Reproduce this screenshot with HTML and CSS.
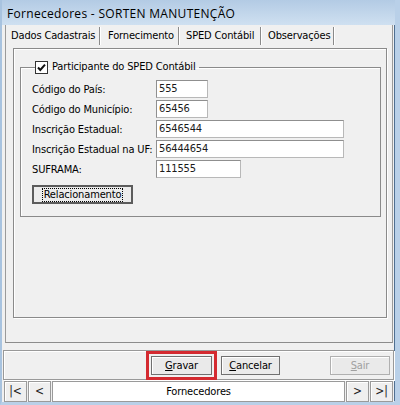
FILE: index.html
```html
<!DOCTYPE html>
<html>
<head>
    <meta charset="utf-8"/>
    <title>Fornecedores - SORTEN MANUTENÇÃO</title>
    <link rel="stylesheet" href="styles.css">
</head>
<body>
<div class="window">
    <div class="titlebar">Fornecedores - SORTEN MANUTENÇÃO</div>

    <div class="client">
        <div class="tabctl">
            <div class="tabs">
                <div class="tab tab-dados">Dados Cadastrais</div>
                <div class="tab tab-forn">Fornecimento</div>
                <div class="tab tab-sped active">SPED Contábil</div>
                <div class="tab tab-obs">Observações</div>
            </div>

            <div class="page">
                <fieldset class="group">
                    <legend>
                        <span class="check">
                            <svg width="13" height="13" viewBox="0 0 13 13">
                                <rect x="0.5" y="0.5" width="12" height="12" fill="#fff" stroke="#333"/>
                                <path d="M3 6.5 L5.3 9 L10 3.6" fill="none" stroke="#111" stroke-width="2"/>
                            </svg>
                        </span>
                        Participante do SPED Contábil
                    </legend>

                    <div class="rows">
                        <div class="row">
                            <label>Código do País:</label>
                            <div class="field w-short">555</div>
                        </div>
                        <div class="row">
                            <label>Código do Município:</label>
                            <div class="field w-short">65456</div>
                        </div>
                        <div class="row">
                            <label>Inscrição Estadual:</label>
                            <div class="field w-long">6546544</div>
                        </div>
                        <div class="row">
                            <label>Inscrição Estadual na UF:</label>
                            <div class="field w-long">56444654</div>
                        </div>
                        <div class="row">
                            <label>SUFRAMA:</label>
                            <div class="field w-mid">111555</div>
                        </div>
                    </div>

                    <button class="btn btn-default"><span class="focus">Relacionamento</span></button>
                </fieldset>
            </div>
        </div>

        <div class="buttonbar">
            <div class="highlight">
                <button class="btn btn-action"><u>G</u>ravar</button>
            </div>
            <button class="btn btn-action btn-cancel"><u>C</u>ancelar</button>
            <button class="btn btn-action btn-sair" disabled><u>S</u>air</button>
        </div>

        <div class="navbar">
            <div class="navbtn">|&lt;</div>
            <div class="navbtn">&lt;</div>
            <div class="navtitle">Fornecedores</div>
            <div class="navbtn">&gt;</div>
            <div class="navbtn">&gt;|</div>
        </div>
    </div>
</div>
</body>
</html>
```

FILE: styles.css
```css
html,
body {
    margin: 0;
    padding: 0;
    background: #f0f0f0;
}

.window {
    width: 400px;
    height: 405px;
    box-sizing: border-box;
    display: flex;
    flex-direction: column;
    background: #bcd3ea;
    border-left: 2px solid #a8c3df;
    border-right: 5px solid #b9d0e8;
    border-bottom: 4px solid #b9d0e8;
    box-shadow: inset -1px 0 0 #4f6f91, inset 0 -1px 0 #4f6f91;
    font-family: "DejaVu Sans Condensed", Tahoma, "Liberation Sans", sans-serif;
    font-size: 11px;
    letter-spacing: -0.15px;
    color: #000;
}

.titlebar {
    height: 25px;
    flex: none;
    box-sizing: border-box;
    padding: 5px 0 0 5px;
    font-family: "Open Sans", "Liberation Sans", sans-serif;
    font-size: 12px;
    letter-spacing: 0.3px;
    color: #000;
    background: linear-gradient(to bottom, #b3cbe4, #cfe0f1);
}

.client {
    flex: 1;
    display: flex;
    flex-direction: column;
    background: #f0f0f0;
    margin-right: 1px;
}

/* tab control */

.tabctl {
    height: 318px;
    box-sizing: border-box;
    margin: 0 1px 0 3px;
    padding: 0 5px 0 7px;
    border-left: 1px solid #9a9a9a;
    border-bottom: 1px solid #8c8c8c;
    border-right: 1px solid #9a9a9a;
}

.tabs {
    display: flex;
    height: 23px;
    margin-left: -8px;
    padding-top: 2px;
    box-sizing: border-box;
}

.tab {
    height: 18px;
    line-height: 17px;
    box-sizing: border-box;
    padding-left: 6px;
    border-right: 1px solid #8a8a8a;
    box-shadow: 1px 0 0 #fff;
    white-space: nowrap;
}

.tab-dados { width: 95px; }
.tab-forn { width: 79px; padding-left: 8px; }
.tab-sped { width: 82px; padding-left: 7px; }
.tab-obs { width: 73px; padding-left: 7px; }

.page {
    height: 270px;
    box-sizing: border-box;
    border: 1px solid #8a8a8a;
    box-shadow: inset 1px 1px 0 #fff, 1px 1px 0 #fff;
    padding: 11px 5px 0 6px;
}

.group {
    margin: 0;
    padding: 6px 0 12px 11px;
    border: 1px solid #8a8a8a;
    box-shadow: inset 1px 1px 0 #fff;
}

.group legend {
    margin-left: 3px;
    padding: 0 3px 0 0;
    height: 14px;
    line-height: 14px;
    display: flex;
    align-items: center;
    gap: 4px;
}

.check {
    display: flex;
    width: 13px;
    height: 13px;
}

.rows {
    display: flex;
    flex-direction: column;
    gap: 2px;
}

.row {
    display: flex;
    align-items: center;
    height: 18px;
}

.row label {
    width: 124px;
    flex: none;
    white-space: nowrap;
}

.field {
    height: 18px;
    box-sizing: border-box;
    line-height: 16px;
    padding-left: 2px;
    background: #fff;
    border: 1px solid #8f8f8f;
    border-right-color: #b8b8b8;
    border-bottom-color: #b8b8b8;
    color: #1a1a1a;
}

.w-short { width: 52px; }
.w-long { width: 188px; }
.w-mid { width: 85px; }

/* buttons */

.btn {
    font-family: "DejaVu Sans Condensed", Tahoma, "Liberation Sans", sans-serif;
    font-size: 11px;
    letter-spacing: -0.15px;
    color: #000;
    background: #eaeaea;
    border: 1px solid #707070;
    box-shadow: inset 1px 1px 0 #fff;
    padding: 0;
    height: 20px;
    box-sizing: border-box;
}

.btn u {
    text-decoration: underline;
}

.btn-default {
    margin-top: 7px;
    width: 101px;
    height: 19px;
    border: 2px solid #5c5c5c;
    box-shadow: none;
    background: #ececec;
}

.btn-default .focus {
    outline: 1px dotted #000;
    outline-offset: 0;
    padding: 0 1px;
    line-height: 12px;
    display: inline-block;
}

.buttonbar {
    height: 30px;
    box-sizing: border-box;
    margin-top: 7px;
    margin-left: 1px;
    border: 1px solid #999;
    box-shadow: inset 1px 1px 0 #fff, 1px 1px 0 #fff;
    display: flex;
    align-items: center;
    padding-left: 142px;
}

.highlight {
    display: flex;
    padding: 2px;
    border: 3px solid #d42a30;
    margin-top: 1px;
}

.btn-action {
    width: 61px;
    height: 19px;
}

.btn-cancel {
    margin-left: 4px;
    width: 59px;
    margin-top: 1px;
}

.btn-sair {
    margin-left: 50px;
    width: 60px;
    margin-top: 1px;
    color: #a0a0a0;
    border-color: #b0b0b0;
}

/* record navigator */

.navbar {
    flex: 1;
    display: flex;
    padding: 1px 1px 0 2px;
    gap: 1px;
}

.navbtn {
    width: 23px;
    box-sizing: border-box;
    border: 1px solid #9a9a9a;
    box-shadow: inset 1px 1px 0 #fff;
    text-align: center;
    line-height: 19px;
    font-size: 12px;
    color: #222;
    background: #efefef;
}

.navtitle {
    flex: 1;
    background: #fff;
    border: 1px solid #9a9a9a;
    text-align: center;
    line-height: 19px;
    font-size: 11px;
}
```
